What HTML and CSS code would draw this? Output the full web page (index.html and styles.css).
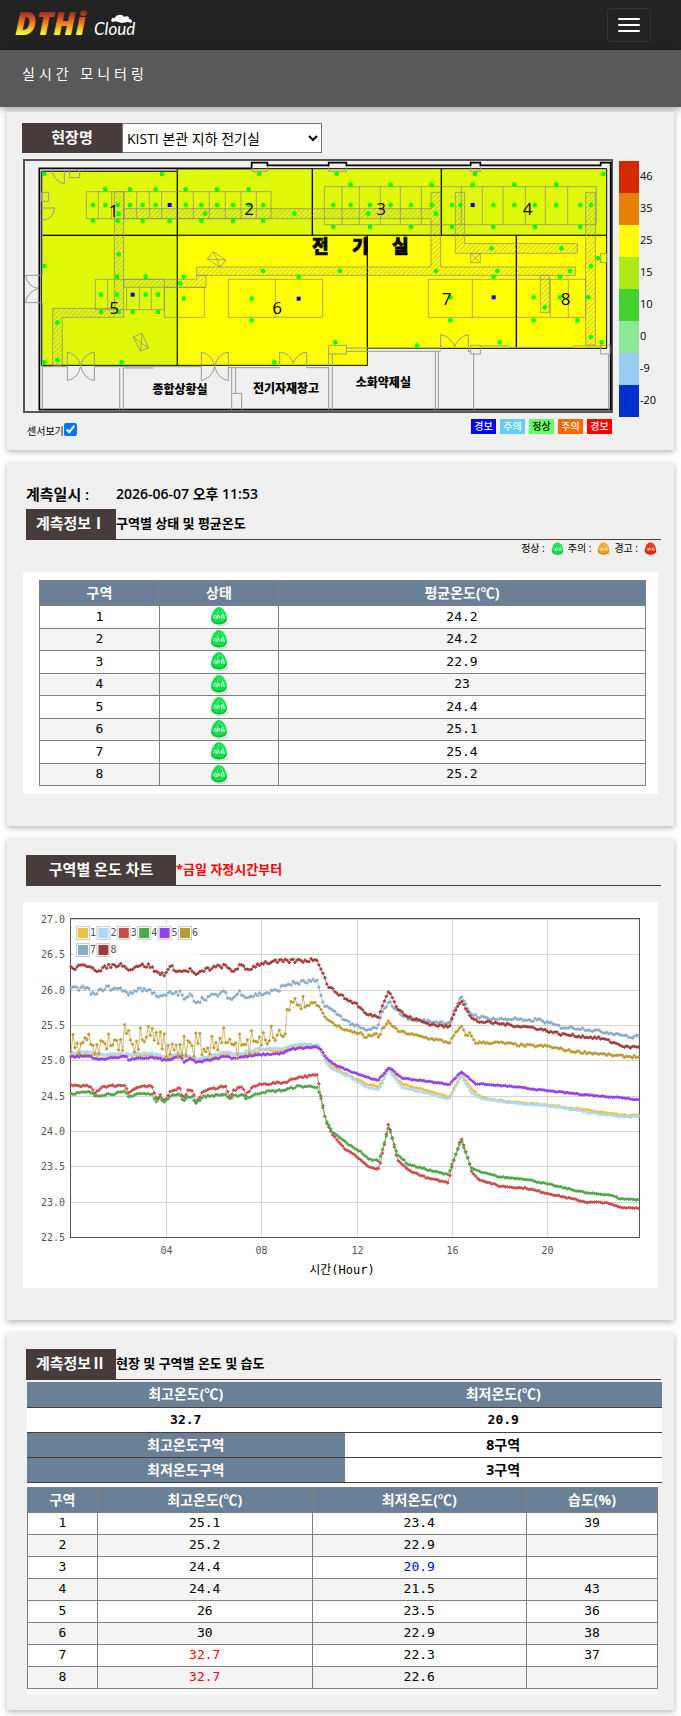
FILE: index.html
```html
<!DOCTYPE html>
<html lang="ko">
<head>
    <meta charset="UTF-8">
    <meta name="viewport" content="width=device-width, initial-scale=1.0">
    <title>DTHi Cloud - 실시간 모니터링</title>
    <link rel="stylesheet" href="styles.css">
</head>
<body>
    <nav class="nav-bar">
        <a href="#" class="brand" aria-label="DTHi Cloud">
            <svg class="brand-logo" viewBox="0 -10 140 48" width="140" height="48">
                <defs>
                    <linearGradient id="fire" x1="0" y1="0" x2="0" y2="1">
                        <stop offset="0.25" stop-color="#a8281c"/>
                        <stop offset="0.5" stop-color="#ee7d1c"/>
                        <stop offset="0.75" stop-color="#f4f436"/>
                    </linearGradient>
                </defs>
                <text x="0" y="24" class="logo-main" fill="url(#fire)">DTHi</text>
                <text x="79" y="24" class="logo-sub">Cloud</text>
                <path d="M97 11c-2-3 1-5 3-4 1-4 8-4 9-1 3-2 6 0 5 2 3 0 4 3 2 4-4-2-6 0-9 0-4-1-6-2-10-1z" fill="#fff"/>
            </svg>
        </a>
        <button type="button" class="menu-btn" aria-label="메뉴">
            <span class="bar"></span>
            <span class="bar"></span>
            <span class="bar"></span>
        </button>
    </nav>
    <header class="page-title">
        <h1>실시간 모니터링</h1>
    </header>

    <main>
        <!-- floor map -->
        <section class="card map-card">
            <div class="site-row">
                <label for="site" class="tag-title">현장명</label>
                <select id="site">
                    <option>KISTI 본관 지하 전기실</option>
                </select>
            </div>
            <div class="map-row">
                <svg class="floor-map" viewBox="69 27 1770 762">
                    <defs>
                        <pattern id="hatch" width="14" height="14" patternUnits="userSpaceOnUse">
                            <path d="M-2 16L16 -2M-9 9L9 -9M5 23L23 5" stroke="#888" stroke-opacity="0.8" stroke-width="2"/>
                        </pattern>
                    </defs>
                    <rect x="72" y="30" width="1764" height="756" fill="#f0f0f0" stroke="#555" stroke-width="6"/>

                    <!-- zones -->
                    <g stroke="#000" stroke-width="3">
                        <path fill="#e0f80a" d="M124 64H532V256H124zM532 56H937V256H532zM937 56H1324V256H937zM1324 56H1820V256H1324zM124 256H532V646H124z"/>
                        <path fill="#ff0" d="M532 256H1102V646H532zM1102 256H1549V595H1102zM1549 256H1820V595H1549z"/>
                    </g>
                    <path d="M118 55H755V38H802V46H986V38H1039V46H1412V38H1441V46H1802V38H1832V779H118z" fill="none" stroke="#000" stroke-width="5"/>

                    <!-- cable ducts -->
                    <g fill="url(#hatch)" stroke="#888" stroke-opacity="0.7" stroke-width="3">
                        <path d="M343 125H371V502H187V646H158V475H343z"/>
                        <path d="M371 176H1293V127H1322V351H1726V376H590V351H1293V206H371z"/>
                        <path d="M371 388H590V376H618V412H371z"/>
                        <path d="M1366 127H1394V281H1732V310H1366z"/>
                        <path d="M1757 127H1786V585H1757z"/>
                        <path d="M1621 376H1648V488H1621z"/>
                    </g>

                    <!-- cabinets -->
                    <g fill="none" stroke="#888" stroke-opacity="0.7" stroke-width="3">
                        <path d="M259 125H813V206H259zM295 125v81M335 125v81M372 125v81M410 125v81M448 125v81M485 125v81M580 125v81M628 125v81M676 125v81M723 125v81M769 125v81"/>
                        <path d="M973 110H1789V224H973zM1026 110v114M1078 110v114M1141 110v114M1201 110v114M1264 110v114M1384 110v114M1447 110v114M1509 110v114M1576 110v114M1636 110v114M1703 110v114"/>
                        <path d="M286 388H493V479H286zM323 388v91M380 412v67M418 412v67M454 412v67M493 412H613V502H493z"/>
                        <path d="M685 388H968V502H685zM826 388v114M1285 388H1757V502H1285zM1417 388v114M1651 388v114M1705 388v114"/>
                        <path d="M622 327L640 305L677 330L661 352zM622 327L677 330M640 305L661 352"/>
                        <path d="M399 561L426 550L445 594L422 603zM399 561L445 594M426 550L422 603"/>
                        <path d="M1412 311H1441V338H1412zM1412 311l29 27M1441 311l-29 27"/>
                    </g>

                    <!-- doors and walls -->
                    <g fill="none" stroke="#999" stroke-width="3">
                        <path d="M193 56V101Q160 95 155 56M209 60H239V83H209zM124 127H146V154H124zM124 174H164Q160 210 124 211"/>
                        <path d="M76 376H127M76 376Q85 412 115 415Q82 425 76 458H127M127 64V376M127 458V779"/>
                        <path d="M202 692V606Q236 615 242 649Q250 612 283 606V692Q250 685 242 649Q234 685 202 692M604 692V606Q638 615 644 649Q652 612 685 606V692Q652 685 644 649Q636 685 604 692"/>
                        <path d="M839 650V606Q870 610 880 640Q890 610 920 606V653M1322 600V554Q1353 560 1364 590Q1375 560 1405 554V605"/>
                        <path d="M127 650H200M285 650H604M685 650V653H839M920 653H986M370 654H460M359 654V779M370 654V779M695 654V779M707 654V730M697 730H725V779"/>
                        <path d="M986 586H1039V612H986zM986 612V779M997 612V779M1039 594H1322M1039 604H1322M1306 604V779M1315 604V779M1405 604H1412M1412 586H1441V612H1412zM1421 612V779"/>
                        <path d="M1441 588H1526L1530 592H1720V588H1802M1802 586H1830V612H1802zM1826 612V779M1802 311H1820V338H1802zM757 50V64H802V50M986 50V64H1039V50M1412 50V64H1441V50M127 62H532"/>
                    </g>

                    <g class="room-name">
                        <text x="961" y="309" class="room-main">전</text>
                        <text x="1081" y="309" class="room-main">기</text>
                        <text x="1201" y="309" class="room-main">실</text>
                        <text x="540" y="733">종합상황실</text>
                        <text x="858" y="729">전기자재창고</text>
                        <text x="1150" y="711">소화약제실</text>
                    </g>
                    <g id="sensors"></g>
                    <g class="zone-no">
                        <text x="341" y="202">1</text>
                        <text x="747" y="196">2</text>
                        <text x="1143" y="196">3</text>
                        <text x="1583" y="196">4</text>
                        <text x="342" y="491">5</text>
                        <text x="831" y="491">6</text>
                        <text x="1340" y="465">7</text>
                        <text x="1697" y="465">8</text>
                    </g>
                </svg>
                <ul class="scale">
                    <li class="c46"><span>46</span></li>
                    <li class="c35"><span>35</span></li>
                    <li class="c25"><span>25</span></li>
                    <li class="c15"><span>15</span></li>
                    <li class="c10"><span>10</span></li>
                    <li class="c0"><span>0</span></li>
                    <li class="c-9"><span>-9</span></li>
                    <li class="c-20"><span>-20</span></li>
                </ul>
            </div>
            <div class="map-footer">
                <div class="sensor-toggle">
                    <label for="showSensor">센서보기</label><input type="checkbox" id="showSensor" checked>
                </div>
                <ul class="level-tags">
                    <li class="cold-alarm">경보</li>
                    <li class="cold-warn">주의</li>
                    <li class="normal">정상</li>
                    <li class="hot-warn">주의</li>
                    <li class="hot-alarm">경보</li>
                </ul>
            </div>
        </section>

        <!-- zone status -->
        <section class="card">
            <p class="measured-at"><span>계측일시 :</span><time>2026-06-07 오후 11:53</time></p>
            <div class="section-head">
                <h2 class="tag-title">계측정보Ⅰ</h2>
                <p>구역별 상태 및 평균온도</p>
            </div>
            <div class="state-legend">
                <span>정상 :</span><svg viewBox="0 0 18 19"><use href="#egg" class="ok"/></svg>
                <span>주의 :</span><svg viewBox="0 0 18 19"><use href="#egg" class="warn"/></svg>
                <span>경고 :</span><svg viewBox="0 0 18 19"><use href="#egg" class="danger"/></svg>
            </div>
            <div class="panel status-panel">
                <table class="grid status-table">
                    <thead>
                        <tr><th>구역</th><th>상태</th><th>평균온도(℃)</th></tr>
                    </thead>
                    <tbody>
                        <tr><td>1</td><td><svg viewBox="0 0 18 19"><use href="#egg" class="ok"/></svg></td><td>24.2</td></tr>
                        <tr><td>2</td><td><svg viewBox="0 0 18 19"><use href="#egg" class="ok"/></svg></td><td>24.2</td></tr>
                        <tr><td>3</td><td><svg viewBox="0 0 18 19"><use href="#egg" class="ok"/></svg></td><td>22.9</td></tr>
                        <tr><td>4</td><td><svg viewBox="0 0 18 19"><use href="#egg" class="ok"/></svg></td><td>23</td></tr>
                        <tr><td>5</td><td><svg viewBox="0 0 18 19"><use href="#egg" class="ok"/></svg></td><td>24.4</td></tr>
                        <tr><td>6</td><td><svg viewBox="0 0 18 19"><use href="#egg" class="ok"/></svg></td><td>25.1</td></tr>
                        <tr><td>7</td><td><svg viewBox="0 0 18 19"><use href="#egg" class="ok"/></svg></td><td>25.4</td></tr>
                        <tr><td>8</td><td><svg viewBox="0 0 18 19"><use href="#egg" class="ok"/></svg></td><td>25.2</td></tr>
                    </tbody>
                </table>
            </div>
        </section>

        <!-- chart -->
        <section class="card">
            <div class="section-head">
                <h2 class="tag-title wide">구역별 온도 차트</h2>
                <p class="note">*금일 자정시간부터</p>
            </div>
            <div class="panel chart-panel">
                <svg id="chart" viewBox="0 0 635 386"></svg>
            </div>
        </section>

        <!-- site and zone temperature / humidity -->
        <section class="card last">
            <div class="section-head">
                <h2 class="tag-title">계측정보Ⅱ</h2>
                <p>현장 및 구역별 온도 및 습도</p>
            </div>
            <div class="panel detail-panel">
                <table class="summary">
                    <tr><th>최고온도(℃)</th><th>최저온도(℃)</th></tr>
                    <tr><td class="num">32.7</td><td class="num">20.9</td></tr>
                    <tr><th>최고온도구역</th><td>8구역</td></tr>
                    <tr><th>최저온도구역</th><td>3구역</td></tr>
                </table>
                <table class="grid detail-table">
                    <thead>
                        <tr><th>구역</th><th>최고온도(℃)</th><th>최저온도(℃)</th><th>습도(%)</th></tr>
                    </thead>
                    <tbody>
                        <tr><td>1</td><td>25.1</td><td>23.4</td><td>39</td></tr>
                        <tr><td>2</td><td>25.2</td><td>22.9</td><td></td></tr>
                        <tr><td>3</td><td>24.4</td><td class="min">20.9</td><td></td></tr>
                        <tr><td>4</td><td>24.4</td><td>21.5</td><td>43</td></tr>
                        <tr><td>5</td><td>26</td><td>23.5</td><td>36</td></tr>
                        <tr><td>6</td><td>30</td><td>22.9</td><td>38</td></tr>
                        <tr><td>7</td><td class="max">32.7</td><td>22.3</td><td>37</td></tr>
                        <tr><td>8</td><td class="max">32.7</td><td>22.6</td><td></td></tr>
                    </tbody>
                </table>
            </div>
        </section>
    </main>

    <!-- status icon -->
    <svg class="sprite" aria-hidden="true">
        <symbol id="egg" viewBox="0 0 18 19">
            <ellipse cx="10" cy="15.500" rx="8" ry="3.500" fill="#c8c4c4"/>
            <ellipse cx="9" cy="14.500" rx="8.500" ry="4" fill="#f4eeee"/>
            <path d="M9 0C13 0 16.500 6 17 11C17.300 15 13.500 17.500 9 17.500S0.700 15 1 11C1.500 6 5 0 9 0z" fill="currentColor"/>
            <path d="M2 12C2 15 5 16.500 9 16.500S16 15 16 12" fill="none" stroke="#000" stroke-opacity="0.2" stroke-width="1.4"/>
            <path d="M10 1.500Q7 4 7.500 8L5 12M11 3Q15 8 14.500 12" fill="none" stroke="#fff" stroke-opacity="0.4"/>
            <path d="M3.500 11L5 8L6.500 9L6 12M7.500 12L8.500 8L10 11M11.500 12V8L14 8M11.500 10H14V12" fill="none" stroke="#fff" stroke-opacity="0.8"/>
        </symbol>
    </svg>
    <script src="app.js"></script>
</body>
</html>
```
FILE: styles.css
```css
* {
    margin: 0;
    padding: 0;
    box-sizing: border-box;
}

body {
    background-color: #fff;
    color: #000;
    font-family: "Open Sans", "Noto Sans CJK KR", sans-serif;
    font-size: 14px;
}

ul {
    list-style: none;
}

.nav-bar {
    background-color: #222;
    height: 50px;
    padding: 0 30px 0 15px;
    display: flex;
    justify-content: space-between;
    align-items: center;
}

.brand-logo {
    display: block;
}

.logo-main {
    font: italic 800 31px "Open Sans", sans-serif;
}

.logo-sub {
    font: italic 17px Lato, sans-serif;
    fill: #fff;
}

.menu-btn {
    width: 44px;
    height: 34px;
    background: transparent;
    border: 1px solid #333;
    border-radius: 4px;
    display: flex;
    flex-direction: column;
    justify-content: center;
    align-items: center;
    gap: 4px;
    cursor: pointer;
}

.menu-btn .bar {
    width: 22px;
    height: 2px;
    border-radius: 1px;
    background-color: #fff;
}

.page-title {
    background-color: #595959;
    height: 57px;
    padding: 14px 22px;
    box-shadow: 0 2px 8px rgba(0, 0, 0, 0.4);
}

.page-title h1 {
    color: #fff;
    font-size: 14px;
    font-weight: 400;
    line-height: 20px;
    letter-spacing: 4px;
}

.card {
    margin: 0 7px 13px;
    padding: 16px 16px 32px;
    background-color: #f0f0f0;
    box-shadow: 0 2px 6px rgba(0, 0, 0, 0.3);
}

.map-card {
    margin-top: 5px;
    padding: 11px 16px 14px;
}

.card.last {
    margin-bottom: 7px;
    padding-bottom: 16px;
}

.tag-title {
    width: 90px;
    height: 30px;
    background-color: #463c3c;
    color: #fff;
    font-size: 15px;
    font-weight: 700;
    line-height: 28px;
    text-align: center;
}

.tag-title.wide {
    width: 150px;
}

/* floor map */
.site-row {
    display: flex;
    margin: 0 0 6px -1px;
}

.site-row .tag-title {
    width: 100px;
}

.site-row select {
    width: 200px;
    height: 30px;
    background-color: #fff;
    border: 1px solid #767676;
    color: #000;
    font-family: inherit;
    font-size: 14px;
}

.map-row {
    display: flex;
    align-items: flex-start;
    gap: 6px;
}

.floor-map {
    flex: 1;
    min-width: 0;
}

.room-name {
    font-family: "Noto Sans CJK KR", sans-serif;
    font-size: 36px;
    font-weight: 900;
    text-anchor: middle;
}

.room-main {
    font-size: 54px;
    stroke: #000;
    stroke-width: 2;
}

.zone-no {
    font-family: "Open Sans", sans-serif;
    font-size: 51px;
    text-anchor: middle;
}

.sensor {
    fill: #0f0;
}

.sensor-main {
    fill: #00f;
}

.scale {
    width: 39px;
    padding-top: 2px;
}

.scale li {
    height: 32px;
    border-left: 20px solid;
    line-height: 30px;
    font-size: 11px;
}

.scale span {
    padding-left: 1px;
}

.scale .c46 { border-color: #d42800; }
.scale .c35 { border-color: #e68000; }
.scale .c25 { border-color: #ff0; }
.scale .c15 { border-color: #aeea14; }
.scale .c10 { border-color: #46d22e; }
.scale .c0 { border-color: #8ce896; }
.scale .c-9 { border-color: #99ccf3; }
.scale .c-20 { border-color: #0030cc; }

.map-footer {
    display: flex;
    justify-content: space-between;
    align-items: flex-start;
    margin-top: 2px;
    padding: 0 46px 0 4px;
    font-size: 10px;
}

.sensor-toggle {
    display: flex;
    align-items: flex-end;
    height: 17px;
}

.sensor-toggle label {
    line-height: 10px;
}

.sensor-toggle input {
    width: 13px;
    height: 13px;
}

.level-tags {
    display: flex;
    gap: 4px;
}

.level-tags li {
    width: 25px;
    height: 15px;
    line-height: 15px;
    text-align: center;
    font-weight: 500;
    color: #fff;
}

.level-tags .cold-alarm { background-color: #00f; }
.level-tags .cold-warn { background-color: #6cf; }
.level-tags .normal { background-color: #6f6; color: #000; }
.level-tags .hot-warn { background-color: #f60; }
.level-tags .hot-alarm { background-color: #f00; }

/* sections */
.section-head {
    display: flex;
    align-items: flex-start;
    margin: 0 -3px 0 3px;
    border-bottom: 1px solid #463c3c;
}

.section-head p {
    font-size: 13px;
    font-weight: 700;
    line-height: 28px;
}

.section-head .note {
    color: #f00;
}

.measured-at {
    display: flex;
    height: 30px;
    padding-left: 3px;
    font-size: 14px;
    font-weight: 600;
    line-height: 30px;
}

.measured-at span {
    width: 90px;
    font-size: 15px;
}

.state-legend {
    display: flex;
    justify-content: flex-end;
    height: 32px;
    padding: 2px 1px 0 0;
    font-size: 10px;
    line-height: 13px;
}

.state-legend span {
    margin: 0 6px 0 4px;
}

.state-legend svg {
    width: 13px;
    height: 14px;
}

.sprite {
    display: none;
}

.ok { color: #0fe04e; }
.warn { color: #f5a01e; }
.danger { color: #e62a14; }

.panel {
    background-color: #fff;
}

.status-panel {
    padding: 8px 12px 8px 16px;
}

.grid {
    width: 100%;
    border-collapse: collapse;
    table-layout: fixed;
}

.grid th,
.grid td {
    border: 1px solid #808080;
    text-align: center;
}

.grid th {
    height: 25px;
    background-color: #698096;
    color: #fff;
    font-size: 14px;
    line-height: 20px;
}

.grid td {
    height: 22px;
    font-family: "DejaVu Sans Mono", monospace;
    font-size: 13px;
    line-height: 18px;
}

.grid tbody tr:nth-child(even) {
    background-color: #f4f4f4;
}

.status-table {
    height: 206px;
}

.status-table th:nth-child(1) {
    width: 120px;
}

.status-table th:nth-child(2) {
    width: 119px;
}

.status-table td svg {
    display: block;
    width: 18px;
    height: 19px;
    margin: 0 auto;
}

/* chart */
.chart-panel {
    margin-top: 16px;
}

.chart-panel svg {
    display: block;
    width: 100%;
}

.chart-label {
    font-family: "DejaVu Sans Mono", monospace;
    font-size: 10px;
    fill: #545454;
}

.chart-title {
    font-family: "DejaVu Sans Mono", "Noto Sans CJK KR", monospace;
    font-size: 12px;
    text-anchor: middle;
}

/* temperature / humidity */
.detail-panel {
    margin: 2px 0 0 4px;
    padding-bottom: 5px;
}

.summary {
    width: calc(100% + 4px);
    border-collapse: collapse;
    table-layout: fixed;
    margin-bottom: 4px;
}

.summary th,
.summary td {
    height: 25px;
    border-bottom: 1px solid #463c3c;
    background-color: #fff;
    text-align: center;
    font-size: 14px;
    font-weight: 700;
    line-height: 20px;
}

.summary th {
    background-color: #698096;
    color: #fff;
}

.summary .num {
    font-family: "DejaVu Sans Mono", monospace;
    font-size: 13px;
}

.detail-table th:nth-child(1) {
    width: 70px;
}

.detail-table th:nth-child(4) {
    width: 131px;
}

.detail-table .min { color: #00f; }
.detail-table .max { color: #f00; }
```
FILE: app.js
```js
const NS = 'http://www.w3.org/2000/svg';

function add(parent, tag, attrs, text) {
    const el = document.createElementNS(NS, tag);
    for (const key in attrs) el.setAttribute(key, attrs[key]);
    if (text !== undefined) el.textContent = text;
    parent.appendChild(el);
    return el;
}

// Sensors: y -> list of x
const sensors = [
    [72, [133, 486, 778, 1010, 1425, 1810]],
    [104, [1052, 1172, 1295, 1418, 1543, 1669]],
    [118, [316, 390, 467, 557, 651, 746]],
    [165, [279, 316, 353, 390, 428, 467, 557, 604, 651, 699, 746, 790, 1000, 1052, 1110, 1172, 1233, 1295, 1356, 1381, 1480, 1543, 1605, 1669, 1741, 1773]],
    [191, [356, 615, 883, 1105, 1308]],
    [212, [279, 353, 428, 509, 604, 699, 790]],
    [231, [1000, 1110, 1233, 1356, 1480, 1605, 1741]],
    [295, [1474, 1684]],
    [313, [356]],
    [325, [1794]],
    [348, [133, 1773]],
    [363, [789, 1020, 1308, 1492, 1710]],
    [380, [351, 437, 551, 896, 1481, 1680]],
    [400, [541]],
    [434, [303, 351, 437, 474]],
    [442, [1351, 1601, 1680, 1765]],
    [446, [551, 755]],
    [472, [1634]],
    [486, [303, 356, 398, 474]],
    [511, [755, 1351, 1601, 1732]],
    [518, [172]],
    [577, [1006, 1499, 1805]],
    [561, [1773]],
    [587, [1251]],
    [630, [172]],
    [637, [133, 365, 823]]
];
const mainSensors = [[509, 165], [1418, 165], [398, 434], [896, 446], [1481, 442]];

const sensorLayer = document.getElementById('sensors');
sensors.forEach(([y, xs]) => xs.forEach(x => add(sensorLayer, 'circle', { cx: x, cy: y, r: 7, class: 'sensor' })));
mainSensors.forEach(([x, y]) => add(sensorLayer, 'rect', { x: x - 6, y: y - 6, width: 12, height: 12, class: 'sensor-main' }));

document.getElementById('showSensor').onchange = function () {
    sensorLayer.style.display = this.checked ? '' : 'none';
};

// Chart: [hour, temperature] knots of each zone, read every 5 minutes
const zones = [
    { name: '1', color: '#edc240', noise: 0.015, data: [[0, 25.08], [3.4, 25.07], [4, 25.04], [4.7, 25.08], [5.3, 25], [6.5, 25.09], [7.4, 25.08], [8, 25.14], [9, 25.15], [9.6, 25.2], [10.4, 25.2], [10.7, 24.99], [11, 24.91], [11.7, 24.78], [12.4, 24.66], [12.95, 24.63], [13.35, 24.88], [13.9, 24.66], [15, 24.57], [15.9, 24.48], [16.4, 24.8], [16.8, 24.6], [17.2, 24.48], [18.5, 24.41], [20, 24.37], [22, 24.28], [23.2, 24.22], [23.9, 24.22]] },
    { name: '2', color: '#afd8f8', noise: 0.015, data: [[0, 25.1], [0.8, 25.12], [1.1, 25.08], [3.4, 25.1], [4, 25.05], [4.7, 25.1], [5.3, 25.01], [6.5, 25.12], [6.8, 25.07], [8, 25.17], [9, 25.18], [9.5, 25.22], [10.4, 25.22], [10.7, 24.98], [11, 24.88], [11.7, 24.77], [12.4, 24.62], [12.95, 24.59], [13.35, 24.87], [13.9, 24.61], [15, 24.53], [15.9, 24.45], [16.4, 24.78], [16.8, 24.55], [17.2, 24.46], [18.5, 24.4], [20, 24.36], [22, 24.25], [23.2, 24.2], [23.9, 24.2]] },
    { name: '3', color: '#cb4b4b', noise: 0.015, data: [[0, 24.65], [0.8, 24.63], [1, 24.53], [1.3, 24.63], [2.3, 24.65], [2.4, 24.54], [2.8, 24.62], [3.4, 24.63], [3.6, 24.45], [3.75, 24.52], [3.9, 24.42], [4.2, 24.57], [4.6, 24.61], [4.7, 24.44], [4.9, 24.57], [5.1, 24.56], [5.25, 24.42], [5.6, 24.57], [6.5, 24.64], [6.7, 24.45], [6.8, 24.57], [7.2, 24.62], [7.35, 24.5], [7.6, 24.62], [8, 24.66], [9, 24.69], [9.5, 24.76], [10.35, 24.79], [10.5, 24.5], [10.7, 24.15], [11, 23.95], [11.5, 23.75], [12, 23.64], [12.55, 23.48], [12.95, 23.46], [13.35, 24.11], [13.7, 23.6], [14.15, 23.45], [15, 23.33], [15.85, 23.27], [16, 23.5], [16.4, 23.91], [16.85, 23.42], [17.1, 23.32], [18, 23.22], [19.1, 23.19], [20, 23.12], [21.7, 22.99], [22.4, 22.99], [23.1, 22.92], [23.9, 22.91]] },
    { name: '4', color: '#4da74d', noise: 0.015, data: [[0, 24.53], [0.8, 24.55], [1, 24.5], [2.3, 24.55], [2.4, 24.48], [2.8, 24.53], [3.4, 24.52], [3.6, 24.42], [3.75, 24.47], [3.9, 24.42], [4.2, 24.5], [4.6, 24.52], [4.7, 24.4], [4.9, 24.49], [5.1, 24.48], [5.25, 24.4], [5.6, 24.49], [6.5, 24.52], [6.7, 24.43], [6.8, 24.49], [7.2, 24.52], [7.35, 24.46], [8, 24.55], [9, 24.58], [9.5, 24.63], [10.35, 24.63], [10.5, 24.45], [10.7, 24.15], [11, 23.98], [11.7, 23.8], [12.2, 23.7], [12.5, 23.6], [12.95, 23.58], [13.35, 24.06], [13.7, 23.68], [14.15, 23.53], [15, 23.45], [15.85, 23.38], [16, 23.53], [16.4, 23.87], [16.8, 23.48], [17.2, 23.42], [18, 23.35], [19.1, 23.32], [20, 23.25], [21.7, 23.12], [22.6, 23.1], [23.1, 23.04], [23.9, 23.03]] },
    { name: '5', color: '#9440ed', noise: 0.012, data: [[0, 25.05], [0.8, 25.06], [1.1, 25.01], [2.3, 25.06], [2.4, 25.01], [3.4, 25.04], [4, 25], [4.6, 25.05], [4.75, 24.98], [5, 25.02], [5.3, 24.97], [6.5, 25.06], [6.8, 25.03], [8, 25.08], [8.9, 25.1], [9.3, 25.16], [10.3, 25.19], [10.45, 25.17], [10.8, 25], [11.2, 24.92], [11.7, 24.85], [12.9, 24.71], [13.35, 24.9], [13.9, 24.75], [15, 24.7], [15.9, 24.66], [16.4, 24.84], [17, 24.67], [18.5, 24.63], [20, 24.57], [22, 24.5], [23.2, 24.47], [23.9, 24.44]] },
    { name: '6', color: '#bd9b33', noise: 0.03, rough: 0.13, data: [[0, 25.27], [1, 25.23], [2.2, 25.28], [2.28, 25.5], [2.4, 25.28], [3.5, 25.3], [4, 25.2], [5, 25.22], [5.6, 25.18], [6.5, 25.33], [7, 25.22], [8, 25.27], [8.95, 25.32], [9.15, 25.77], [9.5, 25.8], [10.3, 25.82], [10.5, 25.72], [10.8, 25.56], [11.1, 25.5], [11.7, 25.41], [12.2, 25.38], [12.35, 25.32], [12.8, 25.38], [12.95, 25.3], [13.05, 25.43], [13.35, 25.55], [13.7, 25.42], [14.5, 25.35], [15.5, 25.28], [15.9, 25.25], [16.2, 25.4], [16.4, 25.48], [16.6, 25.35], [16.75, 25.38], [17, 25.25], [18, 25.25], [19, 25.21], [20, 25.2], [21, 25.13], [22, 25.1], [23, 25.06], [23.9, 25.05]] },
    { name: '7', color: '#8cacc6', noise: 0.035, data: [[0, 26], [0.6, 26.03], [1, 25.92], [1.4, 26.03], [2.2, 26], [2.5, 25.93], [2.8, 26.02], [3.5, 25.97], [3.7, 25.88], [4.2, 25.95], [4.6, 25.95], [4.8, 25.85], [5.1, 25.95], [5.2, 25.82], [5.6, 25.88], [6.5, 25.96], [6.7, 25.85], [7.1, 25.97], [7.4, 25.9], [8.6, 25.98], [9.1, 26.08], [10.2, 26.12], [10.35, 26.1], [10.6, 25.8], [11, 25.7], [11.7, 25.53], [12.4, 25.42], [12.9, 25.47], [13.05, 25.65], [13.35, 25.84], [13.7, 25.7], [14.2, 25.58], [15.1, 25.55], [15.9, 25.53], [16.2, 25.78], [16.4, 25.89], [16.8, 25.66], [17.2, 25.61], [18, 25.58], [18.7, 25.59], [19.1, 25.55], [19.6, 25.58], [20.6, 25.47], [21.5, 25.45], [22.2, 25.41], [23.1, 25.37], [23.5, 25.32], [23.9, 25.36]] },
    { name: '8', color: '#a23c3c', noise: 0.03, data: [[0, 26.3], [0.8, 26.35], [1.2, 26.25], [1.5, 26.33], [2.3, 26.36], [2.4, 26.26], [2.7, 26.34], [3.3, 26.34], [3.6, 26.24], [3.9, 26.22], [4.2, 26.32], [4.6, 26.25], [5, 26.28], [5.3, 26.2], [5.6, 26.28], [6.4, 26.34], [6.8, 26.26], [7.1, 26.34], [7.4, 26.28], [8, 26.38], [9, 26.4], [10.2, 26.42], [10.3, 26.46], [10.5, 26.3], [10.8, 26.05], [11.2, 25.95], [11.7, 25.84], [12, 25.8], [12.4, 25.65], [12.95, 25.62], [13.1, 25.8], [13.35, 26], [13.7, 25.74], [14.1, 25.62], [15.1, 25.51], [15.9, 25.47], [16.1, 25.68], [16.4, 25.86], [16.8, 25.6], [17.1, 25.55], [18, 25.52], [18.7, 25.49], [19.5, 25.46], [20.6, 25.37], [21.4, 25.34], [22.3, 25.31], [23.4, 25.18], [23.9, 25.2]] }
];

const chart = document.getElementById('chart');
const LEFT = 48, RIGHT = 617, TOP = 17, BOTTOM = 335;
const px = hour => LEFT + hour * 23.8;
const py = temp => BOTTOM - (temp - 22.5) * (BOTTOM - TOP) / 4.5;

let seed = 7;
function rand() {
    seed = (seed * 16807) % 2147483647;
    return seed / 2147483647 * 2 - 1;
}

function valueAt(knots, hour) {
    let i = 1;
    while (i < knots.length - 1 && knots[i][0] < hour) i++;
    const [h0, t0] = knots[i - 1];
    const [h1, t1] = knots[i];
    return t0 + (t1 - t0) * (hour - h0) / (h1 - h0);
}

// grid
for (let t = 22.5; t <= 27; t += 0.5) {
    const y = Math.round(py(t)) + 0.5;
    add(chart, 'path', { d: `M${LEFT} ${y}H${RIGHT}`, stroke: '#d4d4d4' });
    add(chart, 'text', { x: 42, y: y + 3.5, 'text-anchor': 'end', class: 'chart-label' }, t.toFixed(1));
}
for (let h = 4; h <= 20; h += 4) {
    const x = Math.round(px(h)) + 0.5;
    add(chart, 'path', { d: `M${x} ${TOP}V${BOTTOM}`, stroke: '#d4d4d4' });
    add(chart, 'text', { x: x, y: 352, 'text-anchor': 'middle', class: 'chart-label' }, String(h).padStart(2, '0'));
}
add(chart, 'rect', { x: LEFT - 0.5, y: TOP - 0.5, width: RIGHT - LEFT, height: BOTTOM - TOP + 1, fill: 'none', stroke: '#545454' });

// series
zones.forEach(zone => {
    let line = '', dots = '';
    for (let i = 0; i <= 286; i++) {
        const hour = i / 12;
        const quiet = hour > 10.4 ? 0.6 : 1;
        let amp = zone.noise * quiet;
        let temp = valueAt(zone.data, hour);
        if (zone.rough && hour < 10.3) {
            amp = hour < 9 ? zone.rough : 0.07;
            temp += (i % 2 ? 0.5 : -0.5) * amp;
        }
        temp += rand() * amp;
        const x = px(hour).toFixed(1), y = py(temp).toFixed(1);
        line += (i ? 'L' : 'M') + x + ' ' + y;
        dots += `M${x} ${y}m-1.5 0l1.5 -1.5l1.5 1.5l-1.5 1.5z`;
    }
    add(chart, 'path', { d: line, fill: 'none', stroke: zone.color, 'stroke-opacity': 0.7 });
    add(chart, 'path', { d: dots, fill: zone.color, stroke: zone.color, 'stroke-width': 0.8 });
});

// legend
add(chart, 'rect', { x: 51, y: 22, width: 125, height: 36, fill: '#fff', 'fill-opacity': 0.85 });
zones.forEach((zone, i) => {
    const x = 53 + (i % 6) * 20.4;
    const y = i < 6 ? 24 : 41;
    add(chart, 'rect', { x: x + 0.5, y: y + 0.5, width: 13, height: 13, fill: '#fff', stroke: '#ccc' });
    add(chart, 'rect', { x: x + 2, y: y + 2, width: 10, height: 10, fill: zone.color });
    add(chart, 'text', { x: x + 14, y: y + 10, class: 'chart-label' }, zone.name);
});

add(chart, 'text', { x: 319, y: 372, class: 'chart-title' }, '시간(Hour)');
```
